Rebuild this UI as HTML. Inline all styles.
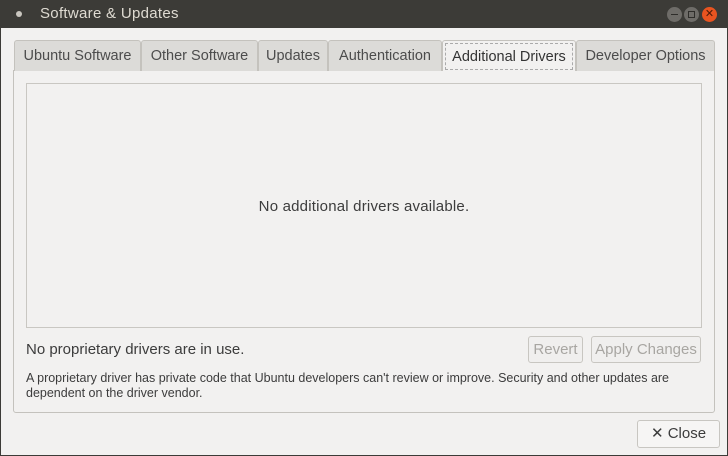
<!DOCTYPE html>
<html><head><style>
*{margin:0;padding:0;box-sizing:border-box}
body{width:728px;height:456px;background:#3c3b37;font-family:"Liberation Sans",sans-serif;position:relative;overflow:hidden}
.win{position:absolute;left:1px;top:28px;width:726px;height:427px;background:#f2f1f0}
.title{position:absolute;left:40px;top:5px;color:#dfdbd2;font-size:15px;letter-spacing:0.3px}
.abs{position:absolute}
.tab{position:absolute;top:40px;height:31px;background:#dcdbd8;border:1px solid #c4c2bd;border-bottom:none;border-radius:3px 3px 0 0;font-size:14.5px;color:#4c4c4c;text-align:center;line-height:31px;white-space:nowrap}
.btn{position:absolute;border:1px solid #c8c6c1;border-radius:3px;background:#f0efee;font-size:15px;text-align:center}
</style></head><body>
<div class="abs" style="left:16px;top:11px;width:6px;height:6px;border-radius:50%;background:#c9c6bf"></div>
<div class="title">Software &amp; Updates</div>
<div class="abs" style="left:667px;top:7px;width:15px;height:15px;border-radius:50%;background:#6e6c68"><div class="abs" style="left:4px;top:7px;width:7px;height:1px;background:#2e2d2a"></div></div>
<div class="abs" style="left:684px;top:7px;width:15px;height:15px;border-radius:50%;background:#6e6c68"><div class="abs" style="left:4px;top:4px;width:7px;height:7px;border:1px solid #2e2d2a"></div></div>
<div class="abs" style="left:702px;top:7px;width:15px;height:15px;border-radius:50%;background:#e95420;color:#4a1a08;font-size:11px;text-align:center;line-height:15px">✕</div>
<div class="win"></div>
<div class="abs" style="left:13px;top:70px;width:702px;height:343px;border:1px solid #c4c2bd;border-radius:0 0 3px 3px;background:#f2f1f0"></div>
<div class="tab" style="left:14px;width:127px">Ubuntu Software</div>
<div class="tab" style="left:141px;width:117px">Other Software</div>
<div class="tab" style="left:258px;width:70px">Updates</div>
<div class="tab" style="left:328px;width:114px">Authentication</div>
<div class="tab" style="left:442px;width:134px;top:40px;height:31px;background:#f2f1f0;color:#333"><div class="abs" style="left:2px;top:2px;right:2px;bottom:1px;border:1px dashed #aaa;line-height:26px">Additional Drivers</div></div>
<div class="tab" style="left:576px;width:139px">Developer Options</div>
<div class="abs" style="left:26px;top:83px;width:676px;height:245px;border:1px solid #c9c7c2;background:#f2f1f0;font-size:15px;letter-spacing:0.2px;color:#3c3c3c;text-align:center;line-height:245px">No additional drivers available.</div>
<div class="abs" style="left:26px;top:341px;font-size:15px;letter-spacing:0px;color:#3c3c3c">No proprietary drivers are in use.</div>
<div class="btn" style="left:528px;top:336px;width:55px;height:27px;line-height:25px;color:#a8a6a2">Revert</div>
<div class="btn" style="left:591px;top:336px;width:110px;height:27px;line-height:25px;color:#a8a6a2">Apply Changes</div>
<div class="abs" style="left:26px;top:371px;font-size:12.5px;color:#3c3c3c;line-height:15px;width:655px">A proprietary driver has private code that Ubuntu developers can't review or improve. Security and other updates are dependent on the driver vendor.</div>
<div class="btn" style="left:637px;top:420px;width:83px;height:28px;line-height:26px;color:#3c3c3c;background:#f6f5f4">✕ Close</div>
</body></html>
